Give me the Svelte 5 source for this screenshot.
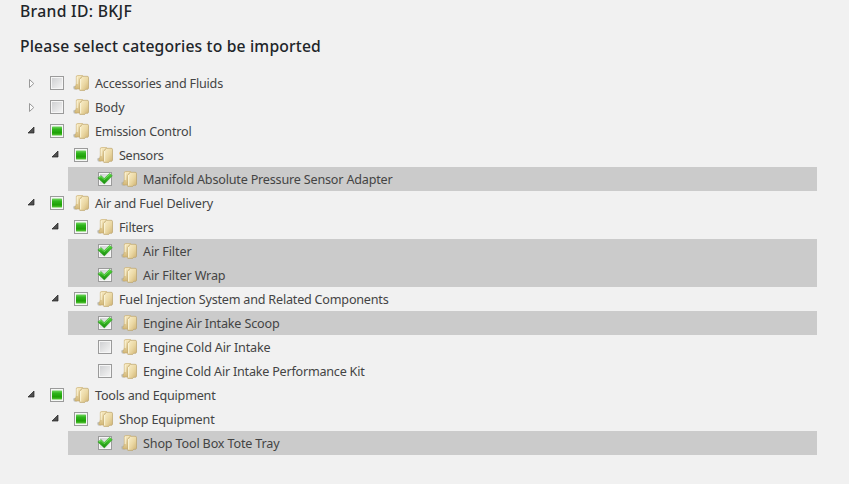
<script>
  import { onMount } from 'svelte';

  // width: rendered width of each label in pixels
  const rows = [
    { level: 0, label: 'Accessories and Fluids', width: 128, arrow: 'closed', check: 'off' },
    { level: 0, label: 'Body', width: 29.5, arrow: 'closed', check: 'off' },
    { level: 0, label: 'Emission Control', width: 96.5, arrow: 'open', check: 'partial' },
    { level: 1, label: 'Sensors', width: 44.5, arrow: 'open', check: 'partial' },
    { level: 2, label: 'Manifold Absolute Pressure Sensor Adapter', width: 249.5, check: 'on' },
    { level: 0, label: 'Air and Fuel Delivery', width: 118, arrow: 'open', check: 'partial' },
    { level: 1, label: 'Filters', width: 34.5, arrow: 'open', check: 'partial' },
    { level: 2, label: 'Air Filter', width: 48.5, check: 'on' },
    { level: 2, label: 'Air Filter Wrap', width: 82.5, check: 'on' },
    { level: 1, label: 'Fuel Injection System and Related Components', width: 269.5, arrow: 'open', check: 'partial' },
    { level: 2, label: 'Engine Air Intake Scoop', width: 136.5, check: 'on' },
    { level: 2, label: 'Engine Cold Air Intake', width: 127.5, check: 'off' },
    { level: 2, label: 'Engine Cold Air Intake Performance Kit', width: 221.5, check: 'off' },
    { level: 0, label: 'Tools and Equipment', width: 120.5, arrow: 'open', check: 'partial' },
    { level: 1, label: 'Shop Equipment', width: 95.5, arrow: 'open', check: 'partial' },
    { level: 2, label: 'Shop Tool Box Tote Tray', width: 136.5, check: 'on' }
  ];

  let page;
  onMount(() => {
    for (const el of page.querySelectorAll('[data-width]')) {
      const natural = el.getBoundingClientRect().width;
      el.style.letterSpacing = `${(Number(el.dataset.width) - natural) / el.textContent.length}px`;
    }
  });
</script>

<svg width="0" height="0" class="defs" aria-hidden="true">
  <defs>
    <linearGradient id="gray" x1="0" y1="0" x2="1" y2="1">
      <stop offset="0" stop-color="#d0d1d3" /><stop offset="1" stop-color="#f3f3f3" />
    </linearGradient>
    <linearGradient id="green" x1="0" y1="0" x2="0" y2="1">
      <stop offset="0" stop-color="#6fd45c" /><stop offset=".3" stop-color="#2fb41c" /><stop offset=".7" stop-color="#1ea006" /><stop offset="1" stop-color="#5cc93c" />
    </linearGradient>
    <linearGradient id="tick" x1="0" y1="0" x2="0" y2="1">
      <stop offset="0" stop-color="#57d83f" /><stop offset="1" stop-color="#148b08" />
    </linearGradient>
    <linearGradient id="front" x1="0" y1="0" x2="1" y2="1">
      <stop offset="0" stop-color="#fbf0cd" /><stop offset=".55" stop-color="#ead7a2" /><stop offset="1" stop-color="#cfb272" />
    </linearGradient>
    <linearGradient id="back" x1="0" y1="0" x2="0" y2="1">
      <stop offset="0" stop-color="#f7e9c0" /><stop offset="1" stop-color="#d3b878" />
    </linearGradient>
  </defs>
</svg>

<main bind:this={page}>
  <h1><span data-width="112">Brand ID: BKJF</span></h1>
  <h2><span data-width="301">Please select categories to be imported</span></h2>
  <div class="tree">
    {#each rows as row}
      <div class="row level{row.level}" class:selected={row.check === 'on'}>
        {#if row.arrow}
          <svg class="arrow" width="16" height="16" viewBox="0 0 16 16">
            {#if row.arrow === 'closed'}
              <path d="M3.5 4.5V12.5L7.8 8.5Z" fill="#fafafa" stroke="#999" />
            {:else}
              <path d="M8 4V10H2Z" fill="#505050" stroke="#222" stroke-width=".7" />
            {/if}
          </svg>
        {/if}
        <svg class="box" width="16" height="16" viewBox="0 0 16 16">
          <rect x="1.5" y="1.5" width="13" height="13" fill="#f6f6f6" stroke="#9b9b9b" />
          <rect x="3" y="3" width="10" height="10" fill="url(#gray)" />
          {#if row.check === 'partial'}
            <rect x="2" y="2" width="12" height="12" fill="#f6f8f6" />
            <rect x="3" y="3.6" width="10" height="9" rx=".5" fill="url(#green)" />
          {:else if row.check === 'on'}
            <g transform="translate(0 .5)">
              <path d="M.8 6.4L4 4L7.2 7L12.6 1.8L15.4 4.2L7.3 12.6Z" fill="url(#tick)" stroke="#29a01b" stroke-width=".4" />
              <path d="M2 6.3L4 4.9L7.2 8.1L12.7 2.8" fill="none" stroke="#83ea70" stroke-width=".7" />
            </g>
          {/if}
        </svg>
        <svg class="folder" width="16" height="16" viewBox="0 0 16 16">
          <path d="M.3 11.5Q2 10 4 11.5V14.5H1Q0 13 .3 11.5Z" fill="#aeb0ad" opacity=".75" />
          <path d="M3.3 1.8Q3.3.5 4.6.5H9.5L10.5 1.5V14H2.2L1.8 12.5Q3.3 10.5 3.3 8Z" fill="url(#back)" stroke="#c6aa68" stroke-width=".6" />
          <path d="M8.2 2.1L9 1.3H14.2Q15.5 1.3 15.5 2.6V13.3L14.8 14.3H12.7L11.7 15.4H6.8V4.2Q6.8 3.2 8.2 3Z" fill="url(#front)" stroke="#b39a60" stroke-width=".6" />
          <path d="M7.6 4V14.5M4.2 2V9" fill="none" stroke="#fffbe5" stroke-width=".8" />
        </svg>
        <span class="label" data-width={row.width}>{row.label}</span>
      </div>
    {/each}
  </div>
</main>

<style>
  :global(body) { background: #f1f1f1; }
  .defs { position: absolute; }
  main {
    box-sizing: border-box;
    height: 484px;
    padding: 0 32px 0 20px;
    overflow: hidden;
    background: #f1f1f1;
    font-family: 'Noto Sans', 'Open Sans', sans-serif;
  }
  h1, h2 {
    margin: 0;
    font-size: 15.7px;
    font-weight: 500;
    color: #212529;
    line-height: 24px;
    white-space: nowrap;
  }
  h1 { height: 34px; line-height: 23px; }
  h2 { height: 37px; line-height: 25px; }
  .row {
    display: flex;
    align-items: center;
    height: 24px;
    color: #444;
    font-size: 12.6px;
    line-height: 24px;
    white-space: nowrap;
  }
  .level0 { padding-left: 6px; }
  .level1 { padding-left: 30px; }
  .level2 { margin-left: 48px; padding-left: 29px; }
  .selected { background: #cbcbcb; }
  svg { flex: none; }
  .arrow { margin-right: 7px; }
  .folder { margin-left: 8px; }
  .label { box-sizing: border-box; height: 24px; padding-top: 1px; margin-left: 6px; }
</style>
